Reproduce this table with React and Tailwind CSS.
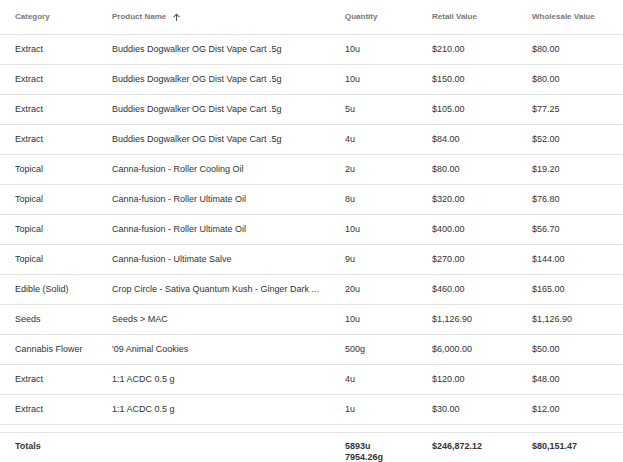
import React from "react";

const rows = [
  ["Extract", "Buddies Dogwalker OG Dist Vape Cart .5g", "10u", "$210.00", "$80.00"],
  ["Extract", "Buddies Dogwalker OG Dist Vape Cart .5g", "10u", "$150.00", "$80.00"],
  ["Extract", "Buddies Dogwalker OG Dist Vape Cart .5g", "5u", "$105.00", "$77.25"],
  ["Extract", "Buddies Dogwalker OG Dist Vape Cart .5g", "4u", "$84.00", "$52.00"],
  ["Topical", "Canna-fusion - Roller Cooling Oil", "2u", "$80.00", "$19.20"],
  ["Topical", "Canna-fusion - Roller Ultimate Oil", "8u", "$320.00", "$76.80"],
  ["Topical", "Canna-fusion - Roller Ultimate Oil", "10u", "$400.00", "$56.70"],
  ["Topical", "Canna-fusion - Ultimate Salve", "9u", "$270.00", "$144.00"],
  ["Edible (Solid)", "Crop Circle - Sativa Quantum Kush - Ginger Dark ...", "20u", "$460.00", "$165.00"],
  ["Seeds", "Seeds > MAC", "10u", "$1,126.90", "$1,126.90"],
  ["Cannabis Flower", "'09 Animal Cookies", "500g", "$6,000.00", "$50.00"],
  ["Extract", "1:1 ACDC 0.5 g", "4u", "$120.00", "$48.00"],
  ["Extract", "1:1 ACDC 0.5 g", "1u", "$30.00", "$12.00"],
];

const cols = "grid grid-cols-[112px_233px_87px_100px_1fr]";

export default function App() {
  return (
    <div className="w-[623px] h-[462px] overflow-hidden bg-white text-[#333] font-['Liberation_Sans',Arial,sans-serif]">
      <div className={`${cols} h-[35px] items-center border-b border-[#e3e3e3] text-[8px] font-semibold text-[#777]`}>
        <div className="pl-[15px]">Category</div>
        <div className="flex items-center gap-[6px]">
          Product Name
          <svg width="9" height="9" viewBox="0 0 10 10" fill="none" stroke="#555" strokeWidth="1.2">
            <path d="M5 9V1.5M1.8 4.5L5 1.3l3.2 3.2" />
          </svg>
        </div>
        <div>Quantity</div>
        <div>Retail Value</div>
        <div>Wholesale Value</div>
      </div>
      {rows.map((r, i) => (
        <div key={i} className={`${cols} h-[30px] items-center border-b border-[#e3e3e3] text-[9px]`}>
          <div className="pl-[15px] whitespace-nowrap">{r[0]}</div>
          <div className="whitespace-nowrap">{r[1]}</div>
          <div>{r[2]}</div>
          <div>{r[3]}</div>
          <div>{r[4]}</div>
        </div>
      ))}
      <div className={`${cols} mt-[7px] border-t border-[#e3e3e3] pt-[8px] text-[9px] font-bold leading-[11px]`}>
        <div className="pl-[15px]">Totals</div>
        <div></div>
        <div>
          <div>5893u</div>
          <div>7954.26g</div>
        </div>
        <div>$246,872.12</div>
        <div>$80,151.47</div>
      </div>
    </div>
  );
}
